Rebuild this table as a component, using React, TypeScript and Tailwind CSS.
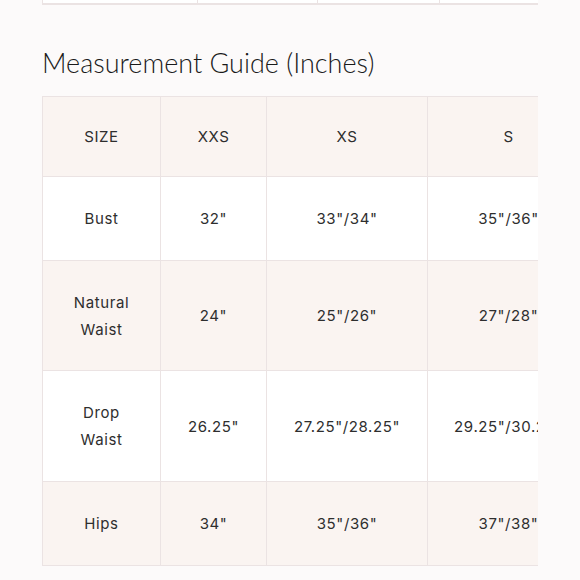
const sizes = ["XXS", "XS", "S"];

const rows: { label: string[]; values: string[]; tint: boolean; h: string }[] = [
  { label: ["Bust"], values: ['32"', '33"/34"', '35"/36"'], tint: false, h: "h-[84px]" },
  { label: ["Natural", "Waist"], values: ['24"', '25"/26"', '27"/28"'], tint: true, h: "h-[110px]" },
  { label: ["Drop", "Waist"], values: ['26.25"', '27.25"/28.25"', '29.25"/30.25"'], tint: false, h: "h-[111px]" },
  { label: ["Hips"], values: ['34"', '35"/36"', '37"/38"'], tint: true, h: "h-[84px]" },
];

const cell = "border border-[#ebe3e3] text-center align-middle";
const widths = ["w-[118px]", "w-[106px]", "w-[161px]", "w-[162px]"];

export default function App() {
  return (
    <div className="w-[580px] h-[580px] overflow-hidden bg-[#fcfafa] text-[#2b2b2b]">
      {/* tail of the previous table */}
      <div className="ml-[42px] w-[496px] overflow-hidden -mt-[20px]">
        <div className="flex w-[560px] h-[25px] bg-white border-b-2 border-[#ebe3e3]">
          <div className="w-[156px] border-l border-r border-[#ebe3e3]" />
          <div className="w-[120px] border-r border-[#ebe3e3]" />
          <div className="w-[122px] border-r border-[#ebe3e3]" />
          <div className="flex-1" />
        </div>
      </div>

      <h2 className="ml-[42px] mt-[41px] text-[27px] leading-[34px] font-['Lato',sans-serif] font-light text-[#1a1a1a]">
        Measurement Guide (Inches)
      </h2>

      <div className="ml-[42px] mt-[16px] w-[496px] overflow-hidden">
        <table className="border-collapse w-[547px] table-fixed font-['Inter',sans-serif] text-[15px] leading-[27px] tracking-[0.04em] text-[#2e2e2e]">
          <thead>
            <tr className="h-[80px] bg-[#faf4f1]">
              <th className={`${cell} ${widths[0]} font-normal`}>SIZE</th>
              {sizes.map((s, i) => (
                <th key={s} className={`${cell} ${widths[i + 1]} font-normal`}>
                  {s}
                </th>
              ))}
            </tr>
          </thead>
          <tbody>
            {rows.map((r) => (
              <tr key={r.label.join(" ")} className={`${r.h} ${r.tint ? "bg-[#faf4f1]" : "bg-white"}`}>
                <td className={cell}>
                  {r.label.map((l) => (
                    <div key={l}>{l}</div>
                  ))}
                </td>
                {r.values.map((v, i) => (
                  <td key={i} className={`${cell} whitespace-nowrap`}>
                    {v}
                  </td>
                ))}
              </tr>
            ))}
          </tbody>
        </table>
      </div>
    </div>
  );
}
